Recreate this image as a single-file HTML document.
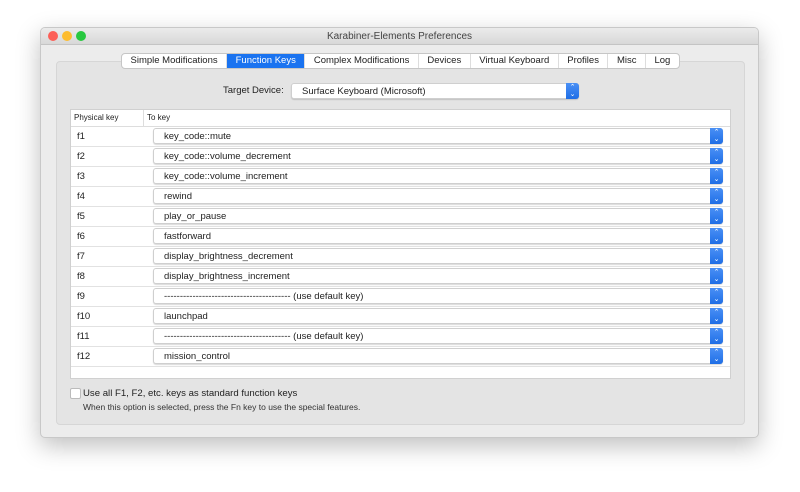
<!DOCTYPE html><html><head><style>
*{box-sizing:border-box;margin:0;padding:0}
body{width:800px;height:492px;background:#fff;font-family:"Liberation Sans",sans-serif;position:relative;overflow:hidden;color:#222}
.win{position:absolute;left:40px;top:27px;width:719px;height:411px;background:#ececec;border:1px solid #c8c8c8;border-radius:5px;box-shadow:0 8px 24px rgba(0,0,0,.25);overflow:hidden}
.tb{height:17px;background:linear-gradient(#ebebeb,#d8d8d8);border-bottom:1px solid #c4c4c4;text-align:center;font-size:10px;line-height:17px;color:#444}
.dot{position:absolute;top:3px;width:10px;height:10px;border-radius:50%}
.grp{position:absolute;left:15px;top:33px;width:689px;height:364px;background:#e4e4e4;border:1px solid #d6d6d6;border-radius:4px}
.tabs{position:absolute;left:80px;top:25px;height:16px;display:flex;background:#fff;border:1px solid #c6c6c6;border-radius:4px;font-size:9.5px;line-height:14px;overflow:hidden}
.tabs div{padding:0 8.5px;border-right:1px solid #ddd;color:#222}
.tabs .a{background:#1a73f0;color:#fff}
.lbl{position:absolute;font-size:9.5px}
.pop{position:absolute;background:#fff;border:1px solid #cfcfcf;border-radius:3px;font-size:9.5px;line-height:15px;padding-left:10px;box-shadow:0 1px 1px rgba(0,0,0,.15)}
.pop .b{position:absolute;right:-1px;top:-1px;width:13px;height:16px;background:linear-gradient(#4a90f5,#1f6ee6);border-radius:0 3px 3px 0;color:#fff;font-size:7px;line-height:7px;text-align:center;padding-top:1px}
.tbl{position:absolute;left:29px;top:81px;width:661px;height:270px;background:#fff;border:1px solid #d0d0d0}
.hd{height:17px;font-size:8px;line-height:16px;border-bottom:1px solid #ddd;position:relative}
.row{height:20px;border-bottom:1px solid #e2e2e2;position:relative;font-size:9.5px}
.row .k{position:absolute;left:6px;top:4px}
.row .pop{left:82px;top:1px;width:570px;height:16px}
</style></head><body>
<div class="win">
<div class="tb">Karabiner-Elements Preferences</div>
<div class="dot" style="left:7px;background:#fc5f57"></div><div class="dot" style="left:21px;background:#fdbc2e"></div><div class="dot" style="left:35px;background:#28c840"></div>
<div class="grp"></div>
<div class="tabs"><div>Simple Modifications</div><div class="a">Function Keys</div><div>Complex Modifications</div><div>Devices</div><div>Virtual Keyboard</div><div>Profiles</div><div>Misc</div><div style="border:0">Log</div></div>
<div class="lbl" style="left:182px;top:57px">Target Device:</div>
<div class="pop" style="left:250px;top:55px;width:288px;height:16px">Surface Keyboard (Microsoft)<div class="b">⌃<br>⌄</div></div>
<div class="tbl">
<div class="hd"><span style="position:absolute;left:3px">Physical key</span><span style="position:absolute;left:72px;border-left:1px solid #ddd;padding-left:3px;height:16px">To key</span></div>
<div class="row"><span class="k">f1</span><div class="pop">key_code::mute<div class="b">⌃<br>⌄</div></div></div>
<div class="row"><span class="k">f2</span><div class="pop">key_code::volume_decrement<div class="b">⌃<br>⌄</div></div></div>
<div class="row"><span class="k">f3</span><div class="pop">key_code::volume_increment<div class="b">⌃<br>⌄</div></div></div>
<div class="row"><span class="k">f4</span><div class="pop">rewind<div class="b">⌃<br>⌄</div></div></div>
<div class="row"><span class="k">f5</span><div class="pop">play_or_pause<div class="b">⌃<br>⌄</div></div></div>
<div class="row"><span class="k">f6</span><div class="pop">fastforward<div class="b">⌃<br>⌄</div></div></div>
<div class="row"><span class="k">f7</span><div class="pop">display_brightness_decrement<div class="b">⌃<br>⌄</div></div></div>
<div class="row"><span class="k">f8</span><div class="pop">display_brightness_increment<div class="b">⌃<br>⌄</div></div></div>
<div class="row"><span class="k">f9</span><div class="pop">---------------------------------------- (use default key)<div class="b">⌃<br>⌄</div></div></div>
<div class="row"><span class="k">f10</span><div class="pop">launchpad<div class="b">⌃<br>⌄</div></div></div>
<div class="row"><span class="k">f11</span><div class="pop">---------------------------------------- (use default key)<div class="b">⌃<br>⌄</div></div></div>
<div class="row"><span class="k">f12</span><div class="pop">mission_control<div class="b">⌃<br>⌄</div></div></div>
</div>
<div style="position:absolute;left:29px;top:360px;width:11px;height:11px;background:#fff;border:1px solid #bbb;border-radius:2px"></div>
<div class="lbl" style="left:42px;top:360px;font-size:9.6px">Use all F1, F2, etc. keys as standard function keys</div>
<div class="lbl" style="left:42px;top:374px;font-size:8.5px;color:#333">When this option is selected, press the Fn key to use the special features.</div>
</div>
</body></html>
